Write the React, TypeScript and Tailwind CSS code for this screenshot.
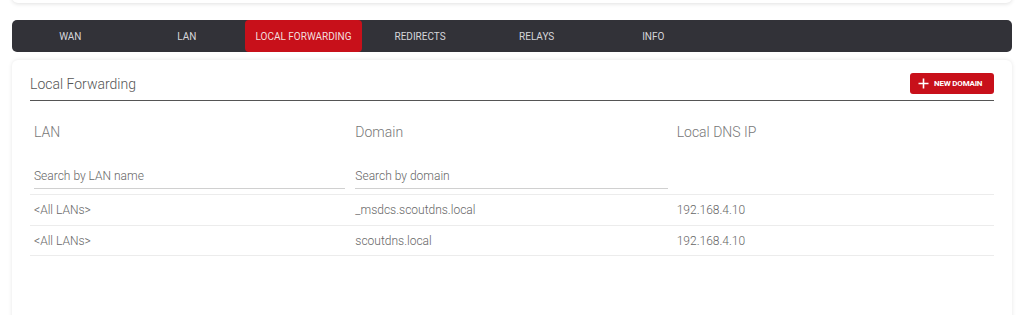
const TABS = ["WAN", "LAN", "LOCAL FORWARDING", "REDIRECTS", "RELAYS", "INFO"];

const ROWS = [
  { lan: "<All LANs>", domain: "_msdcs.scoutdns.local", ip: "192.168.4.10" },
  { lan: "<All LANs>", domain: "scoutdns.local", ip: "192.168.4.10" },
];

export default function App() {
  return (
    <div className="h-[315px] overflow-hidden bg-white font-['Roboto',sans-serif]">
      {/* tail of the card above */}
      <div className="mx-3 -mt-4 h-[19px] rounded-md bg-white shadow-[0_1px_4px_rgba(0,0,0,0.12)]" />

      {/* tab bar */}
      <div className="mx-3 mt-[17px] flex h-8 rounded-[5px] bg-[#323238]">
        {TABS.map((t, i) => (
          <div
            key={t}
            className={
              "flex w-[116.6px] items-center justify-center rounded-[4px] text-[10px] " +
              (i === 2 ? "bg-[#c8101a] text-[#f2dede]" : "text-[#d6d6da]")
            }
          >
            {t}
          </div>
        ))}
      </div>

      {/* main card */}
      <div className="mx-3 mt-2 h-[300px] rounded-md bg-white px-[18px] pt-[13px] shadow-[0_0_4px_rgba(0,0,0,0.1)]">
        <div className="flex h-[28px] items-center justify-between border-b border-[#555]">
          <span className="pb-[4px] text-[14px] font-light text-[#555]">Local Forwarding</span>
          <button className="mb-[6px] flex h-[21px] w-[84px] items-center gap-[5px] rounded-[3px] bg-[#c8101a] pl-[8px] text-[8px] font-bold tracking-[-0.2px] text-white">
            <svg width="11" height="11" viewBox="0 0 11 11">
              <path d="M5.5 0.5v10M0.5 5.5h10" stroke="white" strokeWidth="1.6" />
            </svg>
            NEW DOMAIN
          </button>
        </div>

        <div className="grid grid-cols-3 pt-[21px]">
          <div className="px-1 text-[14px] font-light text-[#777]">LAN</div>
          <div className="px-1 text-[14px] font-light text-[#777]">Domain</div>
          <div className="px-1 text-[14px] font-light text-[#777]">Local DNS IP</div>
        </div>

        <div className="grid grid-cols-3 pt-[20px]">
          <div className="pl-1 pr-[6px]">
            <input
              placeholder="Search by LAN name"
              className="h-[21px] w-full border-b border-[#d0d0d0] pb-1 text-[12px] font-light text-[#555] outline-none placeholder:text-[#666]"
            />
          </div>
          <div className="pl-1 pr-[5px]">
            <input
              placeholder="Search by domain"
              className="h-[21px] w-full border-b border-[#d0d0d0] pb-1 text-[12px] font-light text-[#555] outline-none placeholder:text-[#666]"
            />
          </div>
          <div />
        </div>

        <div className="mt-[5px]">
          {ROWS.map((r) => (
            <div key={r.domain} className="grid h-[31px] grid-cols-3 items-center border-t border-[#ececec] text-[12px] font-light text-[#666] last:border-b">
              <div className="px-1">{r.lan}</div>
              <div className="px-1">{r.domain}</div>
              <div className="px-1">{r.ip}</div>
            </div>
          ))}
        </div>
      </div>
    </div>
  );
}
